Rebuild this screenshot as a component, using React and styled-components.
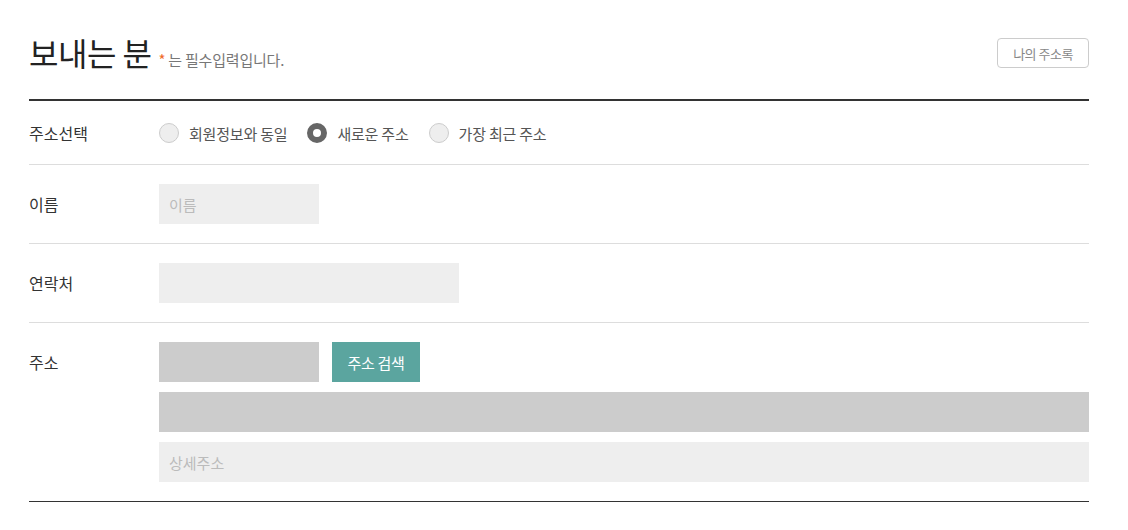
import styled, { createGlobalStyle } from "styled-components";

const GlobalStyle = createGlobalStyle`
  body {
    margin: 0;
    background: #fff;
    font-family: "Noto Sans CJK KR", "Noto Sans", sans-serif;
    color: #333;
  }
`;

const Wrap = styled.div`
  width: 1060px;
  margin: 0 0 0 29px;
`;

const Header = styled.div`
  display: flex;
  align-items: flex-end;
  justify-content: space-between;
  height: 101px;
  border-bottom: 2px solid #333;
  box-sizing: border-box;
  padding-bottom: 27px;
`;

const TitleGroup = styled.div`
  display: flex;
  align-items: baseline;
  gap: 7px;
`;

const Title = styled.h2`
  margin: 0;
  font-size: 32px;
  font-weight: 400;
  color: #222;
  line-height: 40px;
  letter-spacing: -0.5px;
`;

const Required = styled.span`
  font-size: 15px;
  color: #777;
  letter-spacing: -0.2px;
`;

const Star = styled.span`
  color: #f06a2a;
  margin-right: 3px;
`;

const BookButton = styled.button`
  align-self: flex-end;
  margin-bottom: 4px;
  width: 92px;
  height: 30px;
  border: 1px solid #ccc;
  border-radius: 4px;
  background: #fff;
  font-family: inherit;
  font-size: 13px;
  color: #888;
  letter-spacing: -0.5px;
  cursor: pointer;
`;

const Row = styled.div`
  display: flex;
  padding: ${(p) => p.$pad || "19px 0 19px"};
  border-bottom: 1px solid ${(p) => (p.$last ? "#333" : "#ddd")};
`;

const Label = styled.div`
  width: 130px;
  flex-shrink: 0;
  font-size: 16px;
  color: #333;
  line-height: ${(p) => p.$lh || "40px"};
`;

const Field = styled.div`
  flex: 1;
  display: flex;
  flex-direction: column;
  gap: 10px;
`;

const Line = styled.div`
  display: flex;
  gap: 13px;
`;

const Input = styled.input`
  box-sizing: border-box;
  width: ${(p) => p.$w || "100%"};
  height: 40px;
  border: none;
  outline: none;
  padding: 0 10px;
  background: ${(p) => (p.$dark ? "#ccc" : "#eee")};
  font-family: inherit;
  font-size: 15px;
  color: #333;
  &::placeholder {
    color: #bbb;
  }
`;

const SearchButton = styled.button`
  width: 88px;
  height: 40px;
  border: none;
  background: #5ba59f;
  color: #fff;
  font-family: inherit;
  font-size: 15px;
  letter-spacing: -0.3px;
  cursor: pointer;
`;

const Radios = styled.div`
  display: flex;
  align-items: center;
  gap: 20px;
  height: 26px;
`;

const RadioItem = styled.label`
  display: flex;
  align-items: center;
  gap: 10px;
  font-size: 15px;
  color: #555;
  letter-spacing: -0.2px;
`;

const Circle = styled.span`
  box-sizing: border-box;
  width: 20px;
  height: 20px;
  border-radius: 50%;
  background: ${(p) => (p.$on ? "#fff" : "#eee")};
  border: ${(p) => (p.$on ? "6px solid #666" : "1px solid #ccc")};
`;

const Radio = ({ on, children }) => (
  <RadioItem>
    <Circle $on={on} />
    {children}
  </RadioItem>
);

export default function App() {
  return (
    <>
      <GlobalStyle />
      <Wrap>
        <Header>
          <TitleGroup>
            <Title>보내는 분</Title>
            <Required>
              <Star>*</Star>는 필수입력입니다.
            </Required>
          </TitleGroup>
          <BookButton>나의 주소록</BookButton>
        </Header>
        <Row $pad="19px 0 18px">
          <Label $lh="26px">주소선택</Label>
          <Radios>
            <Radio>회원정보와 동일</Radio>
            <Radio on>새로운 주소</Radio>
            <Radio>가장 최근 주소</Radio>
          </Radios>
        </Row>
        <Row>
          <Label>이름</Label>
          <Field>
            <Input $w="160px" placeholder="이름" />
          </Field>
        </Row>
        <Row>
          <Label>연락처</Label>
          <Field>
            <Input $w="300px" />
          </Field>
        </Row>
        <Row $last>
          <Label>주소</Label>
          <Field>
            <Line>
              <Input $w="160px" $dark readOnly />
              <SearchButton>주소 검색</SearchButton>
            </Line>
            <Input $dark readOnly />
            <Input placeholder="상세주소" />
          </Field>
        </Row>
      </Wrap>
    </>
  );
}
